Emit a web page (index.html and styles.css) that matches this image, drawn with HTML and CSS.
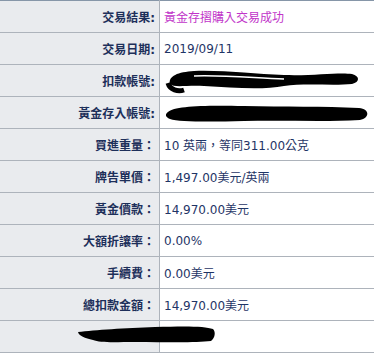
FILE: index.html
```html
<!DOCTYPE html>
<html lang="zh-Hant">
<head>
<meta charset="utf-8">
<link rel="stylesheet" href="styles.css">
</head>
<body>
<div class="wrap">
<table class="result">
  <tr><th>交易結果:</th><td class="ok">黃金存摺購入交易成功</td></tr>
  <tr><th>交易日期:</th><td>2019/09/11</td></tr>
  <tr><th>扣款帳號:</th><td><svg class="redact" width="200" height="30" viewBox="0 0 200 30"><path d="M6 18 C4 10 14 6 30 5 C60 4 90 8 120 9 C150 10 175 6 188 8 C196 10 196 16 188 18 C170 20 140 17 120 20 C100 24 70 22 40 20 C22 19 10 22 6 18 Z" fill="#000"/><path d="M4 17 C6 24 14 26 20 24" stroke="#000" stroke-width="5" fill="none"/><path d="M30 10 C60 9 90 12 120 13" stroke="#fff" stroke-width="1.5" fill="none"/></svg></td></tr>
  <tr><th>黃金存入帳號:</th><td><svg class="redact" width="210" height="30" viewBox="0 0 210 30"><path d="M4 14 C10 8 40 7 80 8 C120 9 160 8 195 10 C206 11 206 20 196 22 C160 24 120 22 80 23 C45 24 15 24 6 21 C1 19 1 16 4 14 Z" fill="#000"/></svg></td></tr>
  <tr><th>買進重量：</th><td>10 英兩，等同311.00公克</td></tr>
  <tr><th>牌告單價：</th><td>1,497.00美元/英兩</td></tr>
  <tr><th>黃金價款：</th><td>14,970.00美元</td></tr>
  <tr><th>大額折讓率：</th><td>0.00%</td></tr>
  <tr><th>手續費：</th><td>0.00美元</td></tr>
  <tr><th>總扣款金額：</th><td>14,970.00美元</td></tr>
  <tr><th></th><td></td></tr>
</table>
<svg class="redact-last" width="142" height="22" viewBox="0 0 142 22"><path d="M3 8 C20 6 50 4 80 3 C110 2 130 2 138 5 C141 8 140 14 136 17 C120 19 90 18 60 18 C40 18 25 19 18 16 C10 14 4 12 3 8 Z" fill="#000"/></svg>
</div>
</body>
</html>
```
FILE: styles.css
```css
html, body {
  margin: 0;
  padding: 0;
  background: #fff;
}
.wrap {
  position: relative;
  width: 374px;
}
.result {
  width: 374px;
  border-collapse: collapse;
  border-top: 1px solid #8696a8;
  font-family: "DejaVu Sans", "Noto Sans CJK TC", sans-serif;
  font-size: 12px;
}
.result tr {
  height: 32px;
}
.result th, .result td {
  border-bottom: 1px solid #adb3bb;
  padding: 0;
  height: 31px;
  box-sizing: border-box;
  vertical-align: middle;
}
.result th {
  width: 160px;
  background: #e9ebee;
  border-right: 1px solid #adb3bb;
  text-align: right;
  padding-right: 4px;
  color: #1d2f5a;
  font-weight: bold;
  box-sizing: border-box;
}
.result td {
  padding-left: 4px;
  color: #1f3566;
  text-align: left;
  white-space: nowrap;
}
.result td.ok {
  color: #c135c9;
}
.redact {
  display: block;
}
.redact-last {
  position: absolute;
  left: 75px;
  top: 324px;
}
```
